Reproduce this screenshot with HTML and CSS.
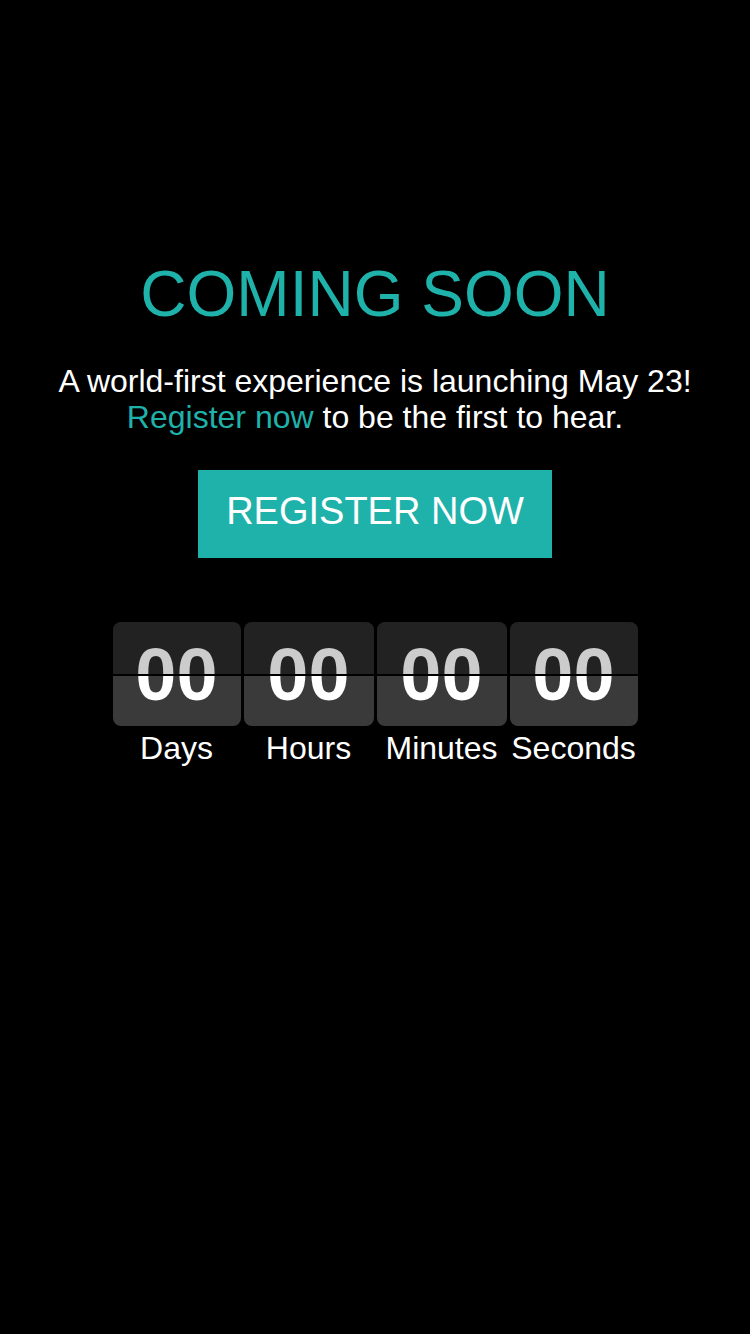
FILE: index.html
```html
<!DOCTYPE html>
<html>
<head>
<meta charset="utf-8">
<link rel="stylesheet" href="styles.css">
</head>
<body>
<main class="page">
  <h1 class="title">COMING SOON</h1>
  <p class="lead">A world-first experience is launching May 23!<br><a class="link" href="#">Register now</a> to be the first to hear.</p>
  <a class="btn" href="#">REGISTER NOW</a>
  <div class="countdown">
    <div class="unit">
      <div class="card"><span class="num">00</span></div>
      <div class="label">Days</div>
    </div>
    <div class="unit">
      <div class="card"><span class="num">00</span></div>
      <div class="label">Hours</div>
    </div>
    <div class="unit">
      <div class="card"><span class="num">00</span></div>
      <div class="label">Minutes</div>
    </div>
    <div class="unit">
      <div class="card"><span class="num">00</span></div>
      <div class="label">Seconds</div>
    </div>
  </div>
</main>
</body>
</html>
```
FILE: styles.css
```css
html, body {
  margin: 0;
  padding: 0;
  background: #000;
}
body {
  width: 750px;
  height: 1334px;
  font-family: "Liberation Sans", Arial, sans-serif;
  color: #fff;
}
.page {
  display: flex;
  flex-direction: column;
  align-items: center;
  padding-top: 255px;
}
.title {
  margin: 0;
  font-size: 64px;
  font-weight: normal;
  line-height: 78px;
  color: #1fb2aa;
}
.lead {
  margin: 30px 0 0;
  font-size: 32px;
  line-height: 36px;
  text-align: center;
}
.link {
  color: #1fb2aa;
  text-decoration: none;
}
.btn {
  margin-top: 35px;
  display: flex;
  align-items: center;
  justify-content: center;
  width: 354px;
  height: 88px;
  box-sizing: border-box;
  background: #1fb2aa;
  color: #fff;
  font-size: 38px;
  text-decoration: none;
  padding-bottom: 6px;
}
.countdown {
  margin-top: 64px;
  display: grid;
  grid-template-columns: 128px 130px 130px 128px;
  column-gap: 3px;
}
.unit {
  display: flex;
  flex-direction: column;
  align-items: center;
}
.card {
  position: relative;
  width: 100%;
  height: 104px;
  border-radius: 8px;
  background: linear-gradient(#222 0, #222 52px, #3a3a3a 52px);
  display: flex;
  align-items: center;
  justify-content: center;
  overflow: hidden;
}
.card::after {
  content: "";
  position: absolute;
  left: 0;
  right: 0;
  top: 52px;
  height: 2px;
  background: #000;
}
.num {
  font-size: 74px;
  font-weight: bold;
  line-height: 1;
  background: linear-gradient(#ccc 0, #ccc 50%, #fff 50%);
  -webkit-background-clip: text;
  background-clip: text;
  color: transparent;
  padding-top: 2px;
}
.label {
  margin-top: 2px;
  font-size: 32px;
  line-height: 40px;
  white-space: nowrap;
}
```
